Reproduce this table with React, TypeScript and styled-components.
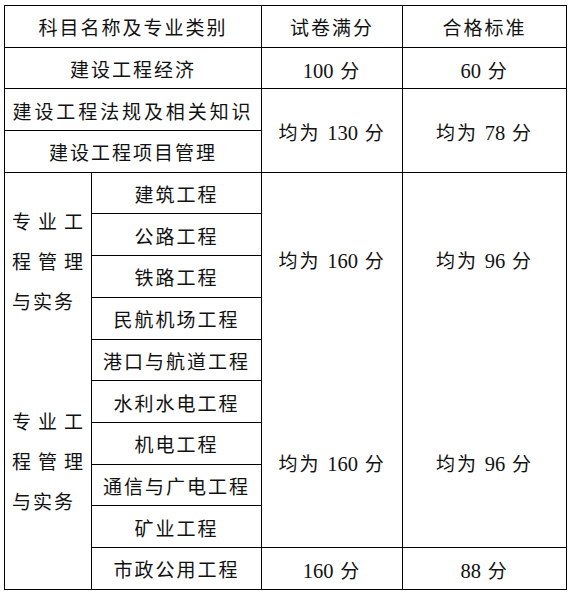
import styled, { createGlobalStyle } from "styled-components";

const GlobalStyle = createGlobalStyle`
  html, body {
    margin: 0;
    padding: 0;
    background: #fff;
  }
  body {
    font-family: "Liberation Serif", "Noto Sans CJK SC", serif;
    color: #111;
  }
`;

const subjects = [
  "建筑工程",
  "公路工程",
  "铁路工程",
  "民航机场工程",
  "港口与航道工程",
  "水利水电工程",
  "机电工程",
  "通信与广电工程",
  "矿业工程",
];

// "均为 130 分" style score text: digits in the serif face, no tracking
function Score({ prefix, value }: { prefix?: string; value: number }) {
  return (
    <span>
      {prefix}
      {prefix ? " " : ""}
      <Num>{value}</Num> 分
    </span>
  );
}

export default function App() {
  return (
    <>
      <GlobalStyle />
      <Page>
        <Table>
          <colgroup>
            <col style={{ width: 87 }} />
            <col style={{ width: 170 }} />
            <col style={{ width: 141 }} />
            <col style={{ width: 164 }} />
          </colgroup>
          <tbody>
            <Row>
              <Cell colSpan={2}>科目名称及专业类别</Cell>
              <Cell>试卷满分</Cell>
              <Cell>合格标准</Cell>
            </Row>
            <Row>
              <Cell colSpan={2}>建设工程经济</Cell>
              <Cell>
                <Score value={100} />
              </Cell>
              <Cell>
                <Score value={60} />
              </Cell>
            </Row>
            <Row>
              <Cell colSpan={2} $spacing={2.9}>
                建设工程法规及相关知识
              </Cell>
              <Cell rowSpan={2}>
                <Score prefix="均为" value={130} />
              </Cell>
              <Cell rowSpan={2}>
                <Score prefix="均为" value={78} />
              </Cell>
            </Row>
            <Row>
              <Cell colSpan={2}>建设工程项目管理</Cell>
            </Row>
            {subjects.map((name, i) => (
              <Row key={name}>
                {i === 0 && (
                  <SideCell rowSpan={10}>
                    <Stack $gap={80} $tail={40}>
                      <SideText>专业工程管理与实务</SideText>
                      <SideText>专业工程管理与实务</SideText>
                    </Stack>
                  </SideCell>
                )}
                <Cell>{name}</Cell>
                {i === 0 && (
                  <>
                    <Cell rowSpan={9}>
                      <Stack $gap={172}>
                        <Score prefix="均为" value={160} />
                        <Score prefix="均为" value={160} />
                      </Stack>
                    </Cell>
                    <Cell rowSpan={9}>
                      <Stack $gap={172}>
                        <Score prefix="均为" value={96} />
                        <Score prefix="均为" value={96} />
                      </Stack>
                    </Cell>
                  </>
                )}
              </Row>
            ))}
            <Row>
              <Cell>市政公用工程</Cell>
              <Cell>
                <Score value={160} />
              </Cell>
              <Cell>
                <Score value={88} />
              </Cell>
            </Row>
          </tbody>
        </Table>
      </Page>
    </>
  );
}

// Styles
const Page = styled.div`
  padding: 5px 0 0 4px;
`;

const Table = styled.table`
  border-collapse: collapse;
  table-layout: fixed;
  width: 563px;
`;

const Row = styled.tr`
  height: 41.7px;
`;

const Cell = styled.td<{ $spacing?: number }>`
  border: 1px solid #000;
  padding: 6px 0 0;
  text-align: center;
  vertical-align: middle;
  font-size: 19px;
  line-height: 30px;
  letter-spacing: ${(p) => p.$spacing ?? 2}px;
  white-space: nowrap;
`;

const Num = styled.span`
  font-size: 20.5px;
  letter-spacing: 0;
`;

const SideCell = styled.td`
  border: 1px solid #000;
  padding: 4px 6px 0 7px;
  vertical-align: middle;
  font-size: 19px;
  line-height: 40px;
  letter-spacing: 2px;
`;

const Stack = styled.div<{ $gap: number; $tail?: number }>`
  display: flex;
  flex-direction: column;
  gap: ${(p) => p.$gap}px;
  padding-bottom: ${(p) => p.$tail ?? 0}px;
`;

const SideText = styled.div`
  text-align: justify;
  text-justify: inter-character;
`;
